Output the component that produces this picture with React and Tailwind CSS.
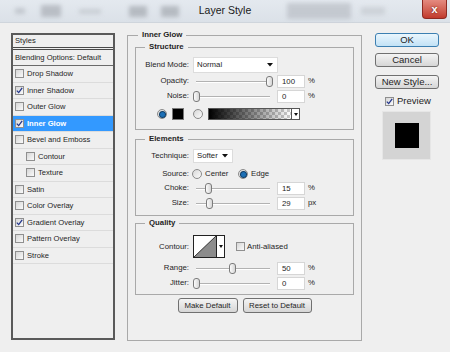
import React from "react";

const Check = ({ checked }) => (
  <span className="w-[9px] h-[9px] shrink-0 border border-[#8f8f8f] bg-linear-to-br from-[#d6d6d6] to-[#fafafa] flex items-center justify-center">
    {checked && (
      <svg width="7" height="7" viewBox="0 0 7 7">
        <path d="M0.8 3.6 L2.7 5.6 L6.2 0.9" stroke="#24378c" strokeWidth="1.3" fill="none" />
      </svg>
    )}
  </span>
);

const Radio = ({ on }) => (
  <span className="w-[10px] h-[10px] shrink-0 rounded-full border border-[#8a8a8a] bg-linear-to-br from-[#d8d8d8] to-[#fbfbfb] flex items-center justify-center">
    {on && <span className="w-[5px] h-[5px] rounded-full bg-[#1c6fb5] ring-1 ring-[#0e3d66]" />}
  </span>
);

const Thumb = () => (
  <svg width="7" height="11" viewBox="0 0 7 11">
    <defs>
      <linearGradient id="thg" x1="0" x2="1" y1="0" y2="0">
        <stop offset="0" stopColor="#ffffff" />
        <stop offset="1" stopColor="#d2d2d2" />
      </linearGradient>
    </defs>
    <rect x="0.5" y="0.5" width="6" height="10" rx="2.5" fill="url(#thg)" stroke="#7b7b7b" />
  </svg>
);

const Slider = ({ pos }) => (
  <div className="relative w-[80px] h-[14px] shrink-0">
    <div className="absolute left-[3px] right-[3px] top-[7px] h-px bg-[#b2b2b2]" />
    <div className="absolute left-[3px] right-[3px] top-[8px] h-px bg-white" />
    <div className="absolute top-[2px]" style={{ left: pos - 3.5 }}>
      <Thumb />
    </div>
  </div>
);

const Label = ({ children }) => (
  <span className="w-[53px] shrink-0 text-right whitespace-nowrap">{children}</span>
);

const Num = ({ v, unit }) => (
  <>
    <div className="ml-[4px] w-[28px] h-[13px] shrink-0 bg-white border border-[#d6d6d6] pl-[4px] leading-[11px]">{v}</div>
    <span className="ml-[3px]">{unit}</span>
  </>
);

const SliderRow = ({ label, pos, v, unit }) => (
  <div className="flex items-center h-[14px]">
    <Label>{label}</Label>
    <span className="w-[4px]" />
    <Slider pos={pos} />
    <Num v={v} unit={unit} />
  </div>
);

const Arrow = () => (
  <svg width="6" height="4" viewBox="0 0 6 4">
    <path d="M0 0 L6 0 L3 3.5 Z" fill="#111" />
  </svg>
);

const Legend = ({ children, ml }) => (
  <legend className={`${ml} px-[4px] font-bold leading-[10px]`}>{children}</legend>
);

const ListRow = ({ label, checked, indent, active }) => (
  <div
    className={`h-[16.5px] flex items-center border-b border-[#dcdcdc] ${indent ? "pl-[13px]" : "pl-[2px]"} ${
      active ? "bg-[#3399ff] text-white font-bold" : ""
    }`}
  >
    <Check checked={checked} />
    <span className="ml-[3px] whitespace-nowrap">{label}</span>
  </div>
);

const Btn = ({ children, w, primary }) => (
  <div
    className={`${w} h-[14px] rounded-[3px] border flex items-center justify-center leading-none ${
      primary
        ? "border-[#3c7fb1] bg-linear-to-b from-[#eaf6fd] to-[#c2e2f6]"
        : "border-[#707070] bg-linear-to-b from-[#f4f4f4] to-[#d6d6d6]"
    }`}
  >
    {children}
  </div>
);

export default function App() {
  return (
    <div className="w-[450px] h-[352px] overflow-hidden bg-[#efefef] text-[#1e1e1e] font-['Liberation_Sans',Arial,sans-serif]">
      {/* Title bar */}
      <div className="relative h-[23px] flex items-start bg-linear-to-b from-[#e4e9ef] to-[#dbe1e8] border-b border-[#cfd5dc]">
        <div className="flex items-center h-[22px] blur-[2px] opacity-70">
          <span className="ml-[15px] w-[10px] h-[6px] bg-[#b7bcc3]" />
          <span className="ml-[16px] w-[20px] h-[12px] bg-[#a9aeb5]" />
          <span className="ml-[18px] w-[22px] h-[5px] bg-[#c0c5cb]" />
          <span className="ml-[28px] w-[18px] h-[11px] bg-[#a4a9b0]" />
          <span className="ml-[14px] w-[18px] h-[11px] bg-[#a4a9b0]" />
          <span className="ml-[108px] w-[64px] h-[16px] bg-[#b9bec5]" />
          <span className="ml-[10px] w-[24px] h-[8px] bg-[#c6cbd1]" />
        </div>
        <span className="absolute inset-x-0 top-[3px] text-center text-[10.5px] text-[#1a1a1a]">Layer Style</span>
        <div className="ml-auto mr-[3px] w-[25px] h-[19px] rounded-b-[4px] border border-t-0 border-[#8e2a22] bg-linear-to-b from-[#e48a80] to-[#c1392c] flex items-center justify-center text-white font-bold text-[11px] [text-shadow:0_0_2px_#5a0c06]">
          x
        </div>
      </div>

      {/* Body */}
      <div className="flex items-start pl-[11px]">
        {/* Left list */}
        <div className="mt-[10px] w-[104px] h-[307px] border-2 border-[#5a5a5a] bg-[#efefef] text-[7.6px]">
          <div className="h-[15px] flex items-center pl-[2px] border-b-[3px] border-double border-[#4a4a4a]">Styles</div>
          <div className="h-[16px] flex items-center pl-[2px] border-b border-[#6a6a6a] whitespace-nowrap">Blending Options: Default</div>
          <ListRow label="Drop Shadow" />
          <ListRow label="Inner Shadow" checked />
          <ListRow label="Outer Glow" />
          <ListRow label="Inner Glow" checked active />
          <ListRow label="Bevel and Emboss" />
          <ListRow label="Contour" indent />
          <ListRow label="Texture" indent />
          <ListRow label="Satin" />
          <ListRow label="Color Overlay" />
          <ListRow label="Gradient Overlay" checked />
          <ListRow label="Pattern Overlay" />
          <ListRow label="Stroke" />
        </div>

        {/* Middle */}
        <fieldset className="ml-[12px] mt-[7px] w-[235px] border border-[#a9a9a9] text-[7.8px] pb-[27px]">
          <Legend ml="ml-[10px]">Inner Glow</Legend>

          {/* Structure */}
          <fieldset className="mx-[7px] mt-[2px] border border-[#a9a9a9] pt-[5px] pb-[9px]">
            <Legend ml="ml-[9px]">Structure</Legend>
            <div className="flex items-center h-[16px]">
              <Label>Blend Mode:</Label>
              <div className="ml-[4px] w-[85px] h-[16px] bg-white border border-[#dcdcdc] flex items-center pl-[3px] pr-[4px]">
                <span className="flex-1">Normal</span>
                <Arrow />
              </div>
            </div>
            <div className="mt-[1px]">
              <SliderRow label="Opacity:" pos={76} v="100" unit="%" />
            </div>
            <div className="mt-[1px]">
              <SliderRow label="Noise:" pos={3} v="0" unit="%" />
            </div>
            <div className="mt-[5px] flex items-center h-[12px] pl-[21px]">
              <Radio on />
              <div className="ml-[5px] w-[12px] h-[12px] bg-black border border-[#777]" />
              <span className="ml-[9px]">
                <Radio />
              </span>
              <div className="ml-[5px] flex h-[12px] border border-[#555]">
                <svg width="82" height="10" viewBox="0 0 82 10">
                  <defs>
                    <pattern id="chk" width="6" height="6" patternUnits="userSpaceOnUse">
                      <rect width="6" height="6" fill="#ffffff" />
                      <rect width="3" height="3" fill="#cccccc" />
                      <rect x="3" y="3" width="3" height="3" fill="#cccccc" />
                    </pattern>
                    <linearGradient id="gg" x1="0" x2="1" y1="0" y2="0">
                      <stop offset="0" stopColor="#000" stopOpacity="1" />
                      <stop offset="1" stopColor="#000" stopOpacity="0" />
                    </linearGradient>
                  </defs>
                  <rect width="82" height="10" fill="url(#chk)" />
                  <rect width="82" height="10" fill="url(#gg)" />
                </svg>
                <div className="w-[8px] h-[10px] bg-white border-l border-[#555] flex items-center justify-center">
                  <svg width="4" height="3" viewBox="0 0 4 3">
                    <path d="M0 0 L4 0 L2 3 Z" fill="#111" />
                  </svg>
                </div>
              </div>
            </div>
          </fieldset>

          {/* Elements */}
          <fieldset className="mx-[7px] mt-[4px] border border-[#a9a9a9] pt-[5px] pb-[5px]">
            <Legend ml="ml-[9px]">Elements</Legend>
            <div className="flex items-center h-[14px]">
              <Label>Technique:</Label>
              <div className="ml-[4px] w-[40px] h-[14px] bg-white border border-[#dcdcdc] flex items-center pl-[3px] pr-[4px]">
                <span className="flex-1">Softer</span>
                <Arrow />
              </div>
            </div>
            <div className="mt-[4px] flex items-center h-[14px]">
              <Label>Source:</Label>
              <span className="ml-[3px]">
                <Radio />
              </span>
              <span className="ml-[3px] w-[33px]">Center</span>
              <Radio on />
              <span className="ml-[3px]">Edge</span>
            </div>
            <SliderRow label="Choke:" pos={15} v="15" unit="%" />
            <div className="mt-[1px]">
              <SliderRow label="Size:" pos={16} v="29" unit="px" />
            </div>
          </fieldset>

          {/* Quality */}
          <fieldset className="mx-[7px] mt-[2px] border border-[#a9a9a9] pt-[7px] pb-[4px]">
            <Legend ml="ml-[9px]">Quality</Legend>
            <div className="flex items-center h-[23px]">
              <Label>Contour:</Label>
              <div className="ml-[4px] flex h-[23px] border border-[#222] bg-white">
                <svg width="22" height="21" viewBox="0 0 22 21">
                  <path d="M0 21 L22 0 L22 21 Z" fill="#8c8c8c" />
                  <path d="M0 21 L22 0" stroke="#333" strokeWidth="1" />
                </svg>
                <div className="w-[8px] border-l border-[#222] flex items-center justify-center">
                  <svg width="4" height="3" viewBox="0 0 4 3">
                    <path d="M0 0 L4 0 L2 3 Z" fill="#111" />
                  </svg>
                </div>
              </div>
              <span className="ml-[11px]">
                <Check />
              </span>
              <span className="ml-[2px]">Anti-aliased</span>
            </div>
            <div className="mt-[3px]">
              <SliderRow label="Range:" pos={39} v="50" unit="%" />
            </div>
            <div className="mt-[1px]">
              <SliderRow label="Jitter:" pos={3} v="0" unit="%" />
            </div>
          </fieldset>

          <div className="mt-[3px] flex justify-center gap-[5px]">
            <div className="w-[60px] h-[15px] rounded-[3px] border border-[#707070] bg-linear-to-b from-[#f4f4f4] to-[#d6d6d6] flex items-center justify-center">
              Make Default
            </div>
            <div className="w-[69px] h-[15px] rounded-[3px] border border-[#707070] bg-linear-to-b from-[#f4f4f4] to-[#d6d6d6] flex items-center justify-center">
              Reset to Default
            </div>
          </div>
        </fieldset>

        {/* Right column */}
        <div className="ml-[13px] mt-[10px] w-[64px] flex flex-col text-[9.5px]">
          <Btn w="w-[64px]" primary>OK</Btn>
          <div className="mt-[6px]">
            <Btn w="w-[64px]">Cancel</Btn>
          </div>
          <div className="mt-[8px]">
            <Btn w="w-[64px]">New Style...</Btn>
          </div>
          <div className="mt-[7px] h-[10px] flex items-center pl-[10px]">
            <Check checked />
            <span className="ml-[3px]">Preview</span>
          </div>
          <div className="mt-[5px] ml-[7px] w-[49px] h-[49px] bg-[#d4d4d4] border border-[#e6e6e6] flex items-center justify-center">
            <div className="w-[24px] h-[25px] bg-black" />
          </div>
        </div>
      </div>
    </div>
  );
}
